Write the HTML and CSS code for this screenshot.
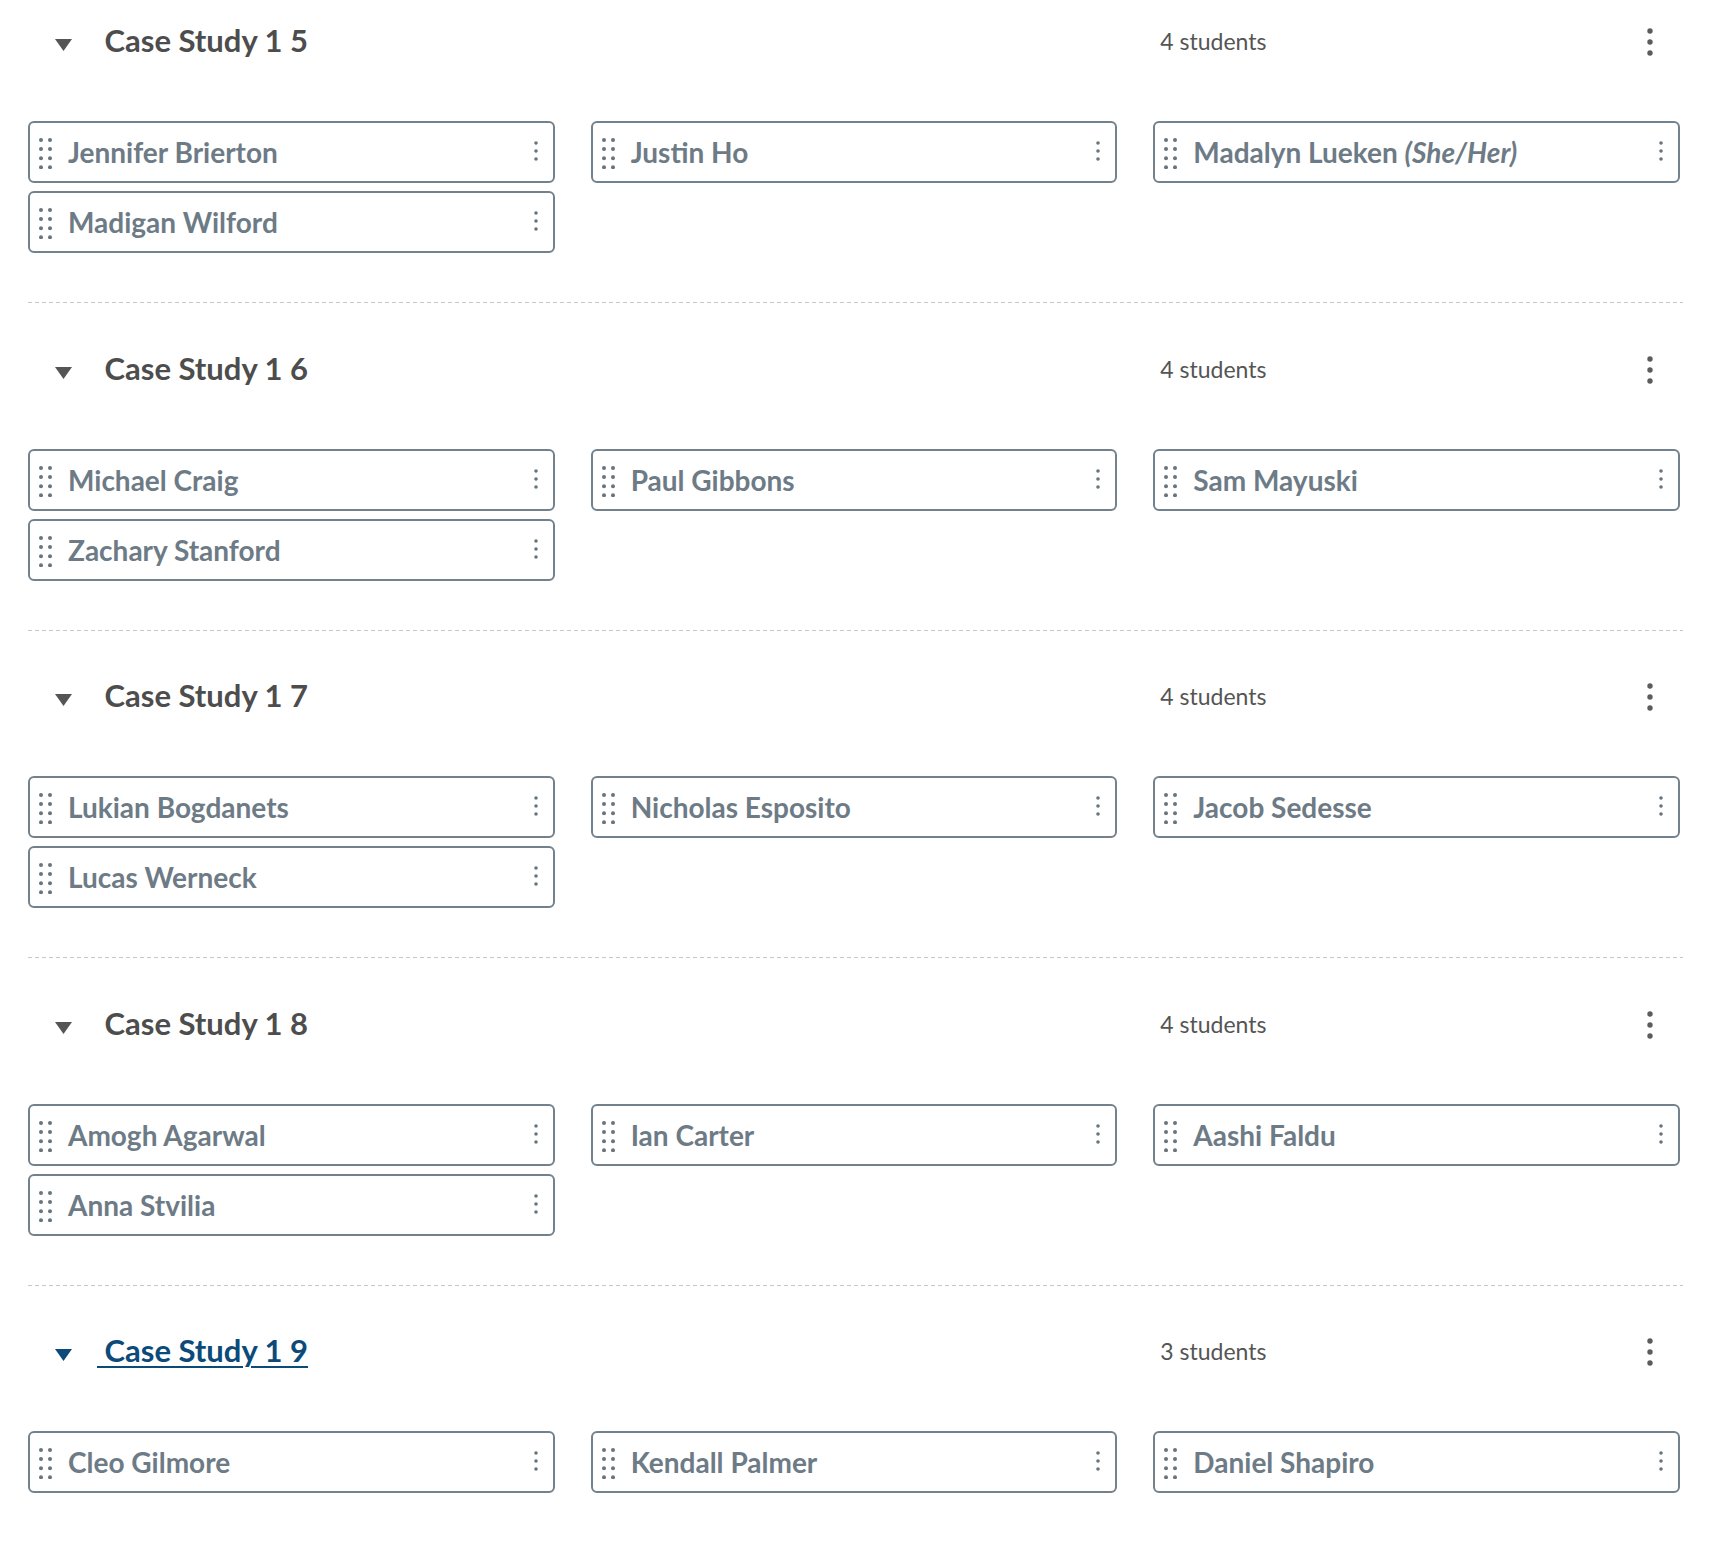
FILE: index.html
```html
<!DOCTYPE html>
<html lang="en">
<head>
<meta charset="utf-8">
<title>Groups</title>
<link rel="stylesheet" href="styles.css">
</head>
<body>
<svg width="0" height="0" class="defs" aria-hidden="true">
  <defs>
    <symbol id="caret" viewBox="0 0 17 12"><path d="M0 0 H17 L8.5 12 Z"/></symbol>
    <symbol id="handle" viewBox="0 0 13 31">
      <circle cx="2" cy="2" r="2"/><circle cx="11" cy="2" r="2"/>
      <circle cx="2" cy="11.1" r="2"/><circle cx="11" cy="11.1" r="2"/>
      <circle cx="2" cy="20.2" r="2"/><circle cx="11" cy="20.2" r="2"/>
      <circle cx="2" cy="29.3" r="2"/><circle cx="11" cy="29.3" r="2"/>
    </symbol>
    <symbol id="dots-sm" viewBox="0 0 4 20"><circle cx="2" cy="2" r="1.8"/><circle cx="2" cy="10" r="1.8"/><circle cx="2" cy="18" r="1.8"/></symbol>
    <symbol id="dots-lg" viewBox="0 0 6 28"><circle cx="3" cy="3" r="2.7"/><circle cx="3" cy="14" r="2.7"/><circle cx="3" cy="25" r="2.7"/></symbol>
  </defs>
</svg>

<main class="groups">

  <section class="group">
    <header class="group-head">
      <div class="head-main"><svg class="caret"><use href="#caret"/></svg><h2 class="group-title"> Case Study 1 5</h2></div>
      <div></div>
      <div class="head-side"><span class="count">4 students</span><svg class="kebab-lg"><use href="#dots-lg"/></svg></div>
    </header>
    <ul class="members">
      <li class="member"><svg class="handle"><use href="#handle"/></svg><span class="name">Jennifer Brierton</span><svg class="kebab-sm"><use href="#dots-sm"/></svg></li>
      <li class="member"><svg class="handle"><use href="#handle"/></svg><span class="name">Justin Ho</span><svg class="kebab-sm"><use href="#dots-sm"/></svg></li>
      <li class="member"><svg class="handle"><use href="#handle"/></svg><span class="name">Madalyn Lueken <em>(She/Her)</em></span><svg class="kebab-sm"><use href="#dots-sm"/></svg></li>
      <li class="member"><svg class="handle"><use href="#handle"/></svg><span class="name">Madigan Wilford</span><svg class="kebab-sm"><use href="#dots-sm"/></svg></li>
    </ul>
    <hr class="divider">
  </section>

  <section class="group">
    <header class="group-head">
      <div class="head-main"><svg class="caret"><use href="#caret"/></svg><h2 class="group-title"> Case Study 1 6</h2></div>
      <div></div>
      <div class="head-side"><span class="count">4 students</span><svg class="kebab-lg"><use href="#dots-lg"/></svg></div>
    </header>
    <ul class="members">
      <li class="member"><svg class="handle"><use href="#handle"/></svg><span class="name">Michael Craig</span><svg class="kebab-sm"><use href="#dots-sm"/></svg></li>
      <li class="member"><svg class="handle"><use href="#handle"/></svg><span class="name">Paul Gibbons</span><svg class="kebab-sm"><use href="#dots-sm"/></svg></li>
      <li class="member"><svg class="handle"><use href="#handle"/></svg><span class="name">Sam Mayuski</span><svg class="kebab-sm"><use href="#dots-sm"/></svg></li>
      <li class="member"><svg class="handle"><use href="#handle"/></svg><span class="name">Zachary Stanford</span><svg class="kebab-sm"><use href="#dots-sm"/></svg></li>
    </ul>
    <hr class="divider">
  </section>

  <section class="group">
    <header class="group-head">
      <div class="head-main"><svg class="caret"><use href="#caret"/></svg><h2 class="group-title"> Case Study 1 7</h2></div>
      <div></div>
      <div class="head-side"><span class="count">4 students</span><svg class="kebab-lg"><use href="#dots-lg"/></svg></div>
    </header>
    <ul class="members">
      <li class="member"><svg class="handle"><use href="#handle"/></svg><span class="name">Lukian Bogdanets</span><svg class="kebab-sm"><use href="#dots-sm"/></svg></li>
      <li class="member"><svg class="handle"><use href="#handle"/></svg><span class="name">Nicholas Esposito</span><svg class="kebab-sm"><use href="#dots-sm"/></svg></li>
      <li class="member"><svg class="handle"><use href="#handle"/></svg><span class="name">Jacob Sedesse</span><svg class="kebab-sm"><use href="#dots-sm"/></svg></li>
      <li class="member"><svg class="handle"><use href="#handle"/></svg><span class="name">Lucas Werneck</span><svg class="kebab-sm"><use href="#dots-sm"/></svg></li>
    </ul>
    <hr class="divider">
  </section>

  <section class="group">
    <header class="group-head">
      <div class="head-main"><svg class="caret"><use href="#caret"/></svg><h2 class="group-title"> Case Study 1 8</h2></div>
      <div></div>
      <div class="head-side"><span class="count">4 students</span><svg class="kebab-lg"><use href="#dots-lg"/></svg></div>
    </header>
    <ul class="members">
      <li class="member"><svg class="handle"><use href="#handle"/></svg><span class="name">Amogh Agarwal</span><svg class="kebab-sm"><use href="#dots-sm"/></svg></li>
      <li class="member"><svg class="handle"><use href="#handle"/></svg><span class="name">Ian Carter</span><svg class="kebab-sm"><use href="#dots-sm"/></svg></li>
      <li class="member"><svg class="handle"><use href="#handle"/></svg><span class="name">Aashi Faldu</span><svg class="kebab-sm"><use href="#dots-sm"/></svg></li>
      <li class="member"><svg class="handle"><use href="#handle"/></svg><span class="name">Anna Stvilia</span><svg class="kebab-sm"><use href="#dots-sm"/></svg></li>
    </ul>
    <hr class="divider">
  </section>

  <section class="group group-active">
    <header class="group-head">
      <div class="head-main"><svg class="caret"><use href="#caret"/></svg><h2 class="group-title"><a href="#" class="title-link"> Case Study 1 9</a></h2></div>
      <div></div>
      <div class="head-side"><span class="count">3 students</span><svg class="kebab-lg"><use href="#dots-lg"/></svg></div>
    </header>
    <ul class="members">
      <li class="member"><svg class="handle"><use href="#handle"/></svg><span class="name">Cleo Gilmore</span><svg class="kebab-sm"><use href="#dots-sm"/></svg></li>
      <li class="member"><svg class="handle"><use href="#handle"/></svg><span class="name">Kendall Palmer</span><svg class="kebab-sm"><use href="#dots-sm"/></svg></li>
      <li class="member"><svg class="handle"><use href="#handle"/></svg><span class="name">Daniel Shapiro</span><svg class="kebab-sm"><use href="#dots-sm"/></svg></li>
    </ul>
  </section>

</main>
</body>
</html>
```

FILE: styles.css
```css
html, body {
  margin: 0;
  padding: 0;
  background: #ffffff;
}

body {
  font-family: "Lato", "Liberation Sans", sans-serif;
  color: #555555;
}

.defs {
  position: absolute;
  width: 0;
  height: 0;
  overflow: hidden;
}

.groups {
  margin-left: 28px;
  width: 1652px;
}

.group-head {
  display: grid;
  grid-template-columns: 1fr 1fr 1fr;
  column-gap: 36px;
  height: 84px;
  align-items: center;
}

.head-main {
  display: flex;
  align-items: center;
}

.caret {
  width: 17px;
  height: 12px;
  margin-left: 27px;
  margin-top: 6px;
  fill: #555555;
  flex: none;
}

.group-title {
  margin: 0 0 0 25px;
  font-size: 31px;
  font-weight: 700;
  color: #4d4d4d;
  white-space: pre;
  line-height: 1.2;
  position: relative;
  top: -1px;
}

.title-link {
  color: #0b4a79;
  text-decoration: underline;
  text-decoration-thickness: 2px;
  text-underline-offset: 4px;
}

.group-active .caret {
  fill: #0b4a79;
}

.head-side {
  display: flex;
  align-items: center;
  justify-content: space-between;
}

.count {
  margin-left: 7px;
  font-size: 23px;
  font-weight: 400;
  color: #555555;
  position: relative;
  top: -1px;
}

.kebab-lg {
  width: 6px;
  height: 28px;
  fill: #5c5c5c;
  margin-right: 27px;
}

.members {
  list-style: none;
  margin: 37px 0 0;
  padding: 0;
  display: grid;
  grid-template-columns: 1fr 1fr 1fr;
  column-gap: 36px;
  row-gap: 8px;
}

.member {
  box-sizing: border-box;
  height: 62px;
  border: 2px solid #73818c;
  border-radius: 6px;
  display: flex;
  align-items: center;
  padding: 0 15px 0 9px;
}

.handle {
  width: 13px;
  height: 31px;
  fill: #67757f;
  flex: none;
  margin-top: 3px;
}

.name {
  flex: 1;
  margin-left: 16px;
  font-size: 28px;
  font-weight: 700;
  color: #6d7b86;
  white-space: nowrap;
}

.name em {
  font-style: italic;
}

.kebab-sm {
  width: 4px;
  height: 20px;
  fill: #67757f;
  flex: none;
  margin-top: -2px;
}

.divider {
  border: 0;
  height: 1px;
  margin: 49px -3px 24.5px 0;
  background: repeating-linear-gradient(to right, #c2c9ce 0 4px, transparent 4px 7px);
}
```
